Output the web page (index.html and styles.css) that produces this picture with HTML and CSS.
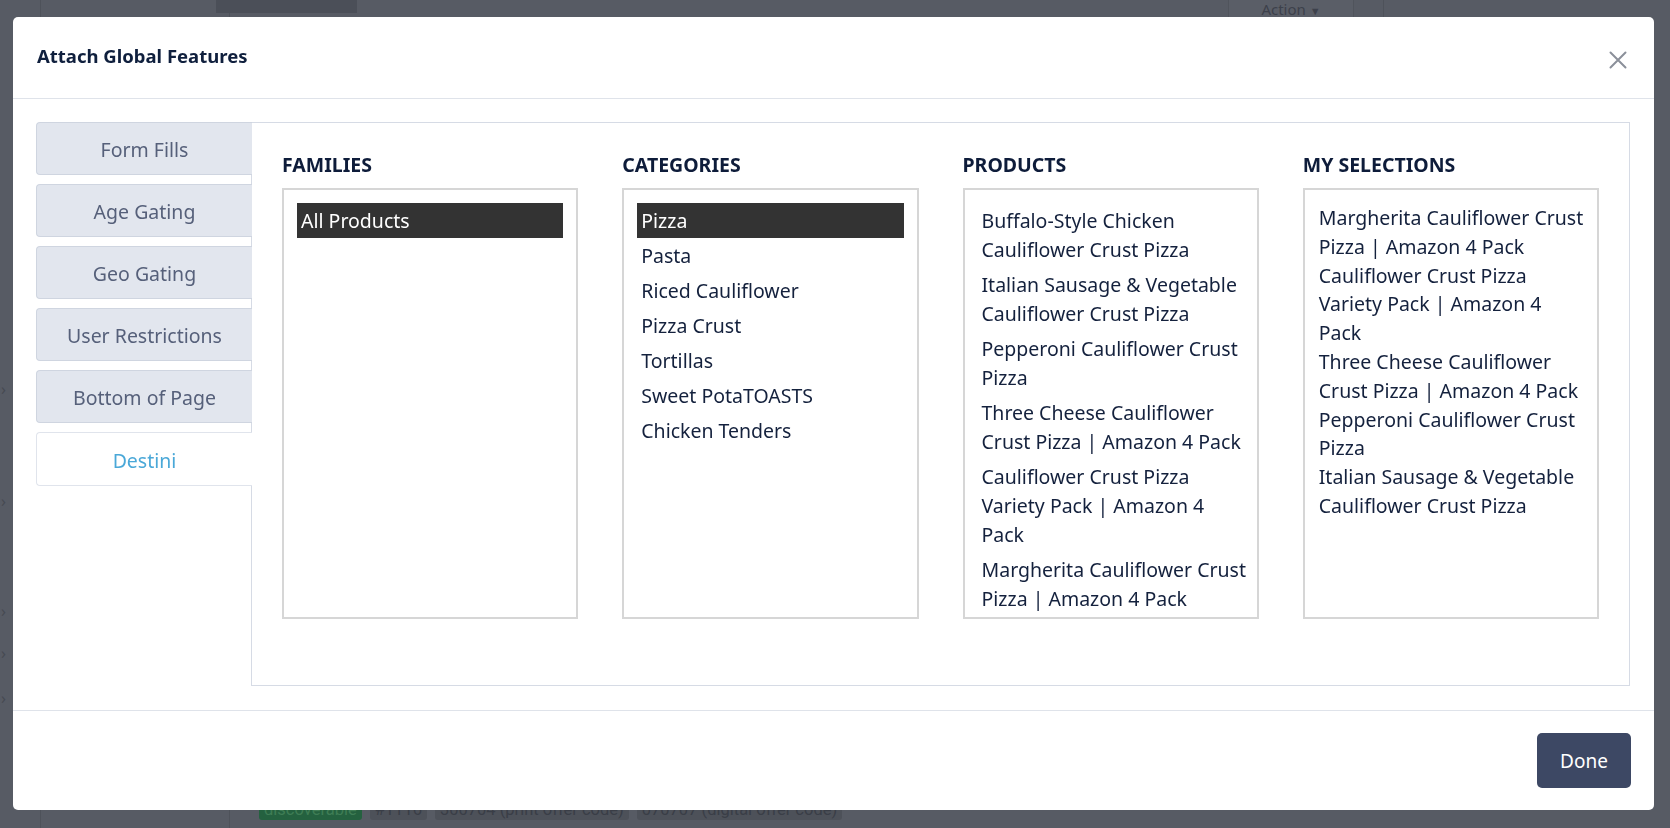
FILE: index.html
```html
<!DOCTYPE html>
<html lang="en">
<head>
<meta charset="utf-8">
<title>Attach Global Features</title>
<link rel="stylesheet" href="styles.css">
</head>
<body>
<div class="page">
  <aside class="rail">
    <span class="chev c1">›</span>
    <span class="chev c2">›</span>
    <span class="chev c3">›</span>
    <span class="chev c4">›</span>
    <span class="chev c5">›</span>
  </aside>
  <nav class="side"></nav>
  <main class="main">
    <div class="topbar">
      <div class="tabblock"></div>
      <div class="grow"></div>
      <div class="action">Action <span class="caret">▼</span></div>
      <div class="rightcol"></div>
    </div>
    <div class="badges">
      <span class="badge green">discoverable</span>
      <span class="badge">#1116</span>
      <span class="badge">300704 (print offer code)</span>
      <span class="badge">070707 (digital offer code)</span>
    </div>
  </main>
</div>

<div class="overlay">
  <div class="modal">
    <header class="modal-header">
      <h2 class="modal-title">Attach Global Features</h2>
      <button class="close" aria-label="Close">
        <svg width="18" height="18" viewBox="0 0 18 18"><path d="M1.5 1.5 L16.5 16.5 M16.5 1.5 L1.5 16.5" stroke="#8b909a" stroke-width="2" stroke-linecap="round" fill="none"/></svg>
      </button>
    </header>

    <div class="modal-body">
      <ul class="tabs">
        <li class="tab">Form Fills</li>
        <li class="tab">Age Gating</li>
        <li class="tab">Geo Gating</li>
        <li class="tab">User Restrictions</li>
        <li class="tab">Bottom of Page</li>
        <li class="tab active">Destini</li>
      </ul>

      <section class="pane">
        <div class="col">
          <h3 class="col-title">FAMILIES</h3>
          <div class="listbox">
            <div class="opt selected">All Products</div>
          </div>
        </div>
        <div class="col">
          <h3 class="col-title">CATEGORIES</h3>
          <div class="listbox">
            <div class="opt selected">Pizza</div>
            <div class="opt">Pasta</div>
            <div class="opt">Riced Cauliflower</div>
            <div class="opt">Pizza Crust</div>
            <div class="opt">Tortillas</div>
            <div class="opt">Sweet PotaTOASTS</div>
            <div class="opt">Chicken Tenders</div>
          </div>
        </div>
        <div class="col">
          <h3 class="col-title">PRODUCTS</h3>
          <div class="listbox">
            <div class="opt">Buffalo-Style Chicken<br>Cauliflower Crust Pizza</div>
            <div class="opt">Italian Sausage &amp; Vegetable<br>Cauliflower Crust Pizza</div>
            <div class="opt">Pepperoni Cauliflower Crust<br>Pizza</div>
            <div class="opt">Three Cheese Cauliflower<br>Crust Pizza | Amazon 4 Pack</div>
            <div class="opt">Cauliflower Crust Pizza<br>Variety Pack | Amazon 4<br>Pack</div>
            <div class="opt">Margherita Cauliflower Crust<br>Pizza | Amazon 4 Pack</div>
          </div>
        </div>
        <div class="col">
          <h3 class="col-title">MY SELECTIONS</h3>
          <div class="listbox selections">
            <div class="sel">Margherita Cauliflower Crust<br>Pizza | Amazon 4 Pack</div>
            <div class="sel">Cauliflower Crust Pizza<br>Variety Pack | Amazon 4<br>Pack</div>
            <div class="sel">Three Cheese Cauliflower<br>Crust Pizza | Amazon 4 Pack</div>
            <div class="sel">Pepperoni Cauliflower Crust<br>Pizza</div>
            <div class="sel">Italian Sausage &amp; Vegetable<br>Cauliflower Crust Pizza</div>
          </div>
        </div>
      </section>
    </div>

    <footer class="modal-footer">
      <button class="done">Done</button>
    </footer>
  </div>
</div>
</body>
</html>
```

FILE: styles.css
```css
* { box-sizing: border-box; }

html, body {
  margin: 0;
  padding: 0;
  width: 1670px;
  height: 828px;
  overflow: hidden;
}

body {
  background: #575b64;
  font-family: "Noto Sans", "Open Sans", sans-serif;
  color: #14213d;
}

/* ---------- dimmed page behind ---------- */
.page {
  display: flex;
  height: 828px;
}

.rail {
  width: 41px;
  border-right: 1px solid #4e525a;
  display: flex;
  flex-direction: column;
  padding-top: 380px;
}

.chev {
  color: #464a52;
  font-size: 16px;
  line-height: 18px;
  margin-left: 1px;
}
.c2 { margin-top: 94px; }
.c3 { margin-top: 92px; }
.c4 { margin-top: 24px; }
.c5 { margin-top: 27px; }

.side {
  width: 189px;
  border-right: 1px solid #4e525a;
}

.main {
  flex: 1;
  min-width: 0;
  display: flex;
  flex-direction: column;
  justify-content: space-between;
}

.topbar {
  display: flex;
  height: 18px;
}

.tabblock {
  width: 141px;
  height: 13px;
  margin-left: -14px;
  background: #4b4f58;
}

.grow { flex: 1; }

.action {
  width: 126px;
  height: 20px;
  background: #5a5e67;
  border: 1px solid #50545c;
  border-top: none;
  color: #3d414b;
  font-size: 15px;
  line-height: 19px;
  text-align: center;
}

.caret { font-size: 11px; }

.rightcol {
  width: 287px;
  margin-left: 29px;
  border-left: 1px solid #4e525a;
}

.badges {
  display: flex;
  gap: 8px;
  margin-left: 29px;
  margin-bottom: 8px;
}

.badge {
  background: #4d5159;
  color: #3a3e47;
  font-family: "Roboto", sans-serif;
  font-size: 16.5px;
  line-height: 20px;
  padding: 0 5px;
  border-radius: 3px;
}

.badge.green {
  background: #24613f;
  color: #3f7d55;
}

/* ---------- modal ---------- */
.overlay {
  position: fixed;
  inset: 0;
  padding: 17px 16px 18px 13px;
}

.modal {
  width: 1641px;
  height: 793px;
  background: #ffffff;
  border-radius: 5px;
  display: flex;
  flex-direction: column;
  overflow: hidden;
}

.modal-header {
  height: 82px;
  flex: none;
  display: flex;
  align-items: center;
  justify-content: space-between;
  padding: 0 27px 0 24px;
  border-bottom: 1px solid #dfe3ea;
}

.modal-title {
  margin: 0;
  font-size: 18.5px;
  font-weight: 700;
  color: #0f1f3d;
  margin-top: -5px;
}

.close {
  border: none;
  background: none;
  padding: 0;
  width: 18px;
  height: 18px;
  margin-top: 4px;
  display: flex;
}

.modal-body {
  flex: 1;
  display: flex;
  padding: 23px 24px 24px 23px;
}

/* tabs */
.tabs {
  list-style: none;
  margin: 0;
  padding: 0;
  width: 216px;
  flex: none;
  margin-right: -1px;
  display: flex;
  flex-direction: column;
  gap: 9px;
  position: relative;
  z-index: 1;
}

.tab {
  height: 53px;
  display: flex;
  align-items: center;
  justify-content: center;
  padding-top: 2px;
  background: #e2e6ee;
  border: 1px solid #cfd5e0;
  border-right: none;
  border-radius: 4px 0 0 4px;
  color: #56607a;
  font-size: 19.5px;
}

.tab.active {
  background: #ffffff;
  border-color: #e0e4ec;
  color: #4aa8d8;
  height: 54px;
}

/* pane */
.pane {
  flex: 1;
  min-width: 0;
  border: 1px solid #d6dbe5;
  padding: 30px 30px 0 30px;
  display: grid;
  grid-template-columns: repeat(4, minmax(0, 1fr));
  column-gap: 44px;
  align-items: start;
}

.col {
  min-width: 0;
}

.col-title {
  margin: 0 0 11px 0;
  font-size: 19.5px;
  line-height: 24px;
  font-weight: 700;
  color: #0e1c3a;
}

.listbox {
  height: 431px;
  border: 2px solid #d6d6d6;
  padding: 13px;
  overflow: hidden;
}

.opt {
  padding: 3px 4px;
  font-size: 19.5px;
  line-height: 29px;
  color: #14213d;
  white-space: nowrap;
}

.opt.selected {
  background: #333333;
  color: #ffffff;
}

.selections {
  padding: 14px 14px;
}

.sel {
  font-size: 19.5px;
  line-height: 28.8px;
  color: #14213d;
  white-space: nowrap;
}

/* footer */
.modal-footer {
  height: 100px;
  flex: none;
  border-top: 1px solid #dfe3ea;
  display: flex;
  justify-content: flex-end;
  align-items: flex-start;
  padding: 22px 23px 0 0;
}

.done {
  width: 94px;
  height: 55px;
  border: none;
  border-radius: 5px;
  background: #3d4864;
  color: #ffffff;
  font-family: "Noto Sans", sans-serif;
  font-size: 19px;
}
```
